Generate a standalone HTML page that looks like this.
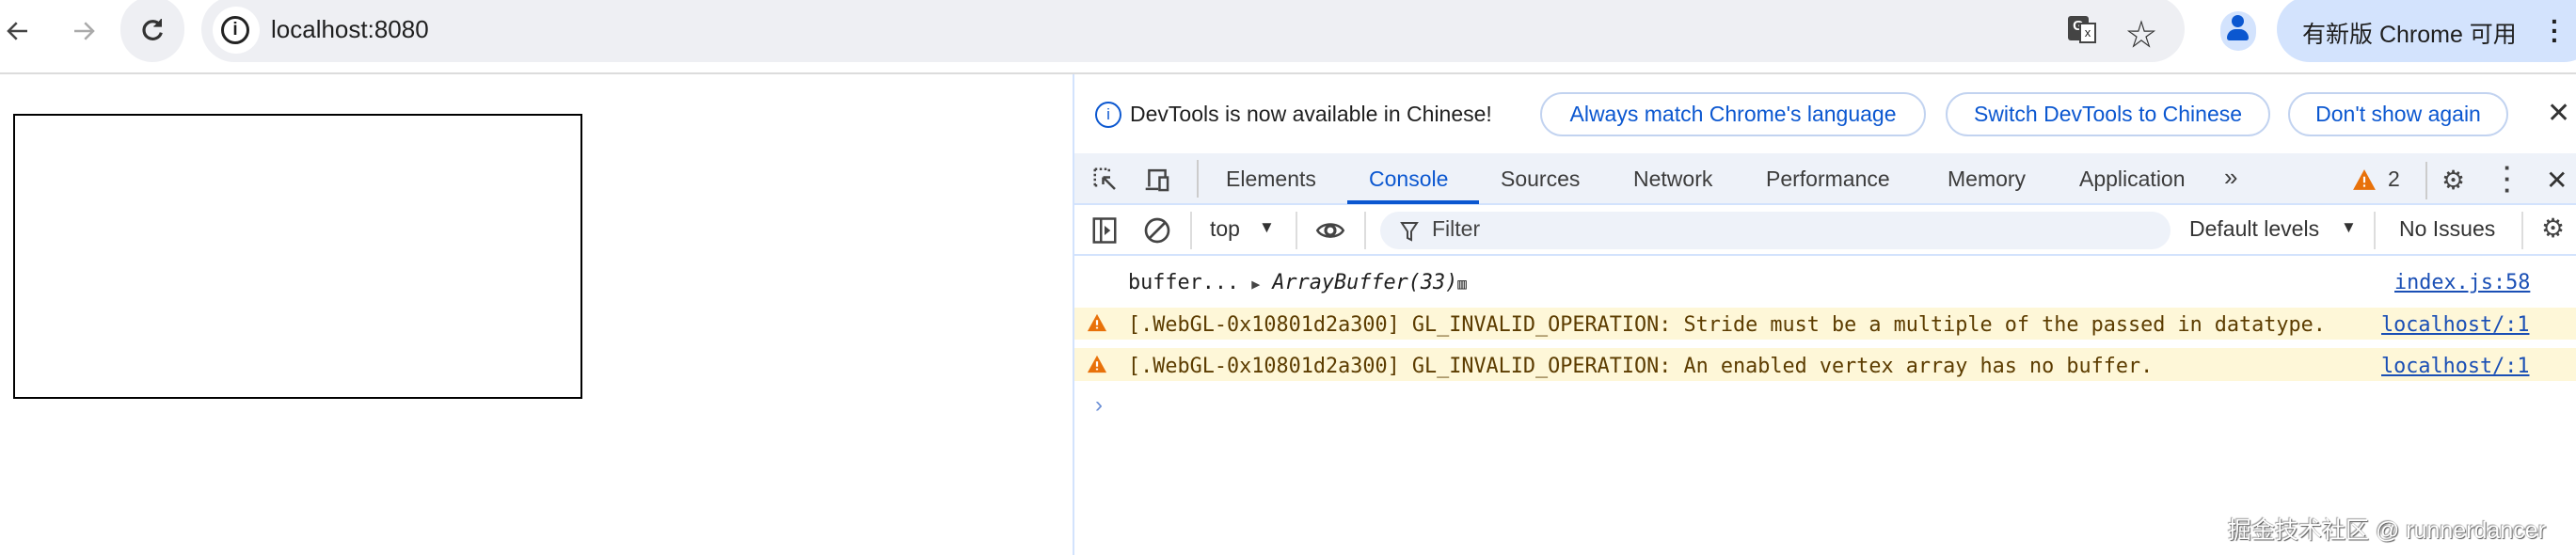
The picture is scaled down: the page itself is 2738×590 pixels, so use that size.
<!DOCTYPE html>
<html><head><meta charset="utf-8"><style>
*{margin:0;padding:0;box-sizing:border-box}
body{width:2738px;height:590px;position:relative;overflow:hidden;background:#fff;font-family:"Liberation Sans","Noto Sans CJK SC",sans-serif;color:#1f1f1f}
.a{position:absolute;white-space:nowrap}
.mono{font-family:"DejaVu Sans Mono","Liberation Mono",monospace}
.btn{position:absolute;top:98px;height:47px;border:2px solid #c2d3f0;border-radius:24px;color:#0b57d0;font-size:23px;line-height:43px;text-align:center}
.tab{position:absolute;top:177px;font-size:23px;color:#3c3c3c}
</style></head><body>
<div class="a" style="left:0;top:0;width:2738px;height:77px;background:#fff"></div>
<svg class="a" style="left:4px;top:18px" width="30" height="30" viewBox="0 0 24 24"><path d="M20 12H5M11 5l-7 7 7 7" fill="none" stroke="#444" stroke-width="2"/></svg>
<svg class="a" style="left:74px;top:18px" width="30" height="30" viewBox="0 0 24 24"><path d="M4 12h15M13 5l7 7-7 7" fill="none" stroke="#aaa" stroke-width="2"/></svg>
<div class="a" style="left:128px;top:-4px;width:68px;height:70px;border-radius:34px;background:#eeeff3"></div>
<svg class="a" style="left:146px;top:16px" width="32" height="32" viewBox="0 0 24 24"><path d="M18 8a7 7 0 1 0 1 6" fill="none" stroke="#333" stroke-width="2.4"/><path d="M19 3v6h-6" fill="#333" stroke="#333" stroke-width="1"/></svg>
<div class="a" style="left:214px;top:-4px;width:2108px;height:70px;border-radius:35px;background:#eeeff3"></div>
<div class="a" style="left:226px;top:7px;width:50px;height:50px;border-radius:25px;background:#fff"></div>
<div class="a" style="left:235px;top:17px;width:30px;height:30px;border-radius:15px;border:3px solid #222;text-align:center;font-weight:bold;font-size:19px;line-height:24px">i</div>
<div class="a" style="left:288px;top:16px;font-size:26px;color:#1f1f1f">localhost:8080</div>
<div class="a" style="left:2198px;top:17px;width:22px;height:26px;background:#444;border-radius:3px;color:#fff;font-size:15px;font-weight:bold;line-height:22px;text-align:center">G</div>
<div class="a" style="left:2210px;top:24px;width:18px;height:22px;border:2px solid #444;background:#fff;font-size:13px;line-height:17px;text-align:center">x</div>
<div class="a" style="left:2260px;top:12px;font-size:32px;color:#333">☆</div>
<div class="a" style="left:2360px;top:12px;width:38px;height:42px;border-radius:19px;background:#d3e3fd"></div>
<div class="a" style="left:2372px;top:16px;width:13px;height:13px;border-radius:7px;background:#0b57d0"></div>
<div class="a" style="left:2367px;top:31px;width:23px;height:12px;border-radius:10px 10px 3px 3px;background:#0b57d0"></div>
<div class="a" style="left:2420px;top:-4px;width:340px;height:70px;border-radius:35px;background:#d3e3fd"></div>
<div class="a" style="left:2447px;top:17px;font-size:25px;color:#1f1f1f">有新版 Chrome 可用</div>
<div class="a" style="left:2711px;top:18px;font-size:28px;font-weight:bold;line-height:10px;color:#1f1f1f">·<br>·<br>·</div>
<div class="a" style="left:0;top:77px;width:2738px;height:2px;background:#dcdcdc"></div>
<div class="a" style="left:14px;top:121px;width:605px;height:303px;border:2px solid #000"></div>
<div class="a" style="left:1140px;top:79px;width:2px;height:511px;background:#d3e3fd"></div>
<div class="a" style="left:1164px;top:108px;width:28px;height:28px;border-radius:14px;border:2px solid #0b57d0;color:#0b57d0;font-size:17px;line-height:24px;text-align:center">i</div>
<div class="a" style="left:1201px;top:108px;font-size:23px">DevTools is now available in Chinese!</div>
<div class="btn" style="left:1637px;width:410px">Always match Chrome's language</div>
<div class="btn" style="left:2068px;width:345px">Switch DevTools to Chinese</div>
<div class="btn" style="left:2432px;width:234px">Don't show again</div>
<div class="a" style="left:2707px;top:103px;font-size:30px;color:#333">✕</div>
<div class="a" style="left:1142px;top:163px;width:1596px;height:54px;background:#eef2f9"></div>
<div class="a" style="left:1142px;top:216px;width:1596px;height:2px;background:#d3e3fd"></div>
<svg class="a" style="left:1160px;top:176px" width="30" height="30" viewBox="0 0 24 24"><path d="M3 3h12M3 3v14M3 17h3M15 3v3" fill="none" stroke="#444" stroke-width="2" stroke-dasharray="2 2"/><path d="M10 10l10 10M10 10h6M10 10v6" fill="none" stroke="#444" stroke-width="2"/></svg>
<svg class="a" style="left:1214px;top:176px" width="32" height="30" viewBox="0 0 26 24"><path d="M6 18V4h14v6M3 20h11" fill="none" stroke="#444" stroke-width="2"/><rect x="15" y="10" width="7" height="11" fill="none" stroke="#444" stroke-width="2"/></svg>
<div class="a" style="left:1272px;top:170px;width:2px;height:40px;background:#ccc"></div>
<div class="tab" style="left:1303px">Elements</div>
<div class="tab" style="left:1455px;color:#0b57d0">Console</div>
<div class="a" style="left:1432px;top:213px;width:140px;height:4px;background:#0b57d0"></div>
<div class="tab" style="left:1595px">Sources</div>
<div class="tab" style="left:1736px">Network</div>
<div class="tab" style="left:1877px">Performance</div>
<div class="tab" style="left:2070px">Memory</div>
<div class="tab" style="left:2210px">Application</div>
<div class="tab" style="left:2364px;font-size:26px;top:173px">»</div>
<svg class="a" style="left:2500px;top:178px" width="26" height="26" viewBox="0 0 24 24"><path d="M12 2L23 22H1z" fill="#e8710a"/><path d="M12 9v6M12 17v2" stroke="#fff" stroke-width="2"/></svg>
<div class="tab" style="left:2538px">2</div>
<div class="a" style="left:2578px;top:172px;width:2px;height:40px;background:#ccc"></div>
<div class="a" style="left:2595px;top:175px;font-size:28px;color:#444">⚙</div>
<div class="a" style="left:2661px;top:172px;font-size:26px;font-weight:bold;line-height:12px;color:#444">·<br>·<br>·</div>
<div class="a" style="left:2706px;top:175px;font-size:28px;color:#333">✕</div>
<div class="a" style="left:1142px;top:270px;width:1596px;height:2px;background:#d3e3fd"></div>
<svg class="a" style="left:1160px;top:230px" width="28" height="30" viewBox="0 0 22 24"><rect x="2" y="2" width="18" height="20" fill="none" stroke="#444" stroke-width="2"/><path d="M8 2v20" stroke="#444" stroke-width="2"/><path d="M11 8l5 4-5 4z" fill="#444"/></svg>
<svg class="a" style="left:1214px;top:229px" width="32" height="32" viewBox="0 0 24 24"><circle cx="12" cy="12" r="9" fill="none" stroke="#444" stroke-width="2"/><path d="M6 18L18 6" stroke="#444" stroke-width="2"/></svg>
<div class="a" style="left:1265px;top:225px;width:2px;height:40px;background:#ddd"></div>
<div class="a" style="left:1286px;top:230px;font-size:23px;color:#333">top</div>
<div class="a" style="left:1338px;top:232px;font-size:17px;color:#333">▼</div>
<div class="a" style="left:1377px;top:225px;width:2px;height:40px;background:#ddd"></div>
<svg class="a" style="left:1397px;top:230px" width="34" height="30" viewBox="0 0 24 24"><path d="M1 12c4-7 18-7 22 0c-4 7-18 7-22 0z" fill="none" stroke="#444" stroke-width="2"/><circle cx="12" cy="12" r="4" fill="none" stroke="#444" stroke-width="2.5"/></svg>
<div class="a" style="left:1450px;top:225px;width:2px;height:40px;background:#ddd"></div>
<div class="a" style="left:1467px;top:225px;width:840px;height:40px;border-radius:20px;background:#eef2f9"></div>
<svg class="a" style="left:1488px;top:234px" width="20" height="24" viewBox="0 0 20 24"><path d="M2 3h16l-6 9v9l-4-2v-7z" fill="none" stroke="#444" stroke-width="2"/></svg>
<div class="a" style="left:1522px;top:230px;font-size:23px;color:#444">Filter</div>
<div class="a" style="left:2327px;top:230px;font-size:23px;color:#333">Default levels</div>
<div class="a" style="left:2488px;top:232px;font-size:17px;color:#333">▼</div>
<div class="a" style="left:2523px;top:225px;width:2px;height:40px;background:#ddd"></div>
<div class="a" style="left:2550px;top:230px;font-size:23px;color:#333">No Issues</div>
<div class="a" style="left:2680px;top:225px;width:2px;height:40px;background:#ddd"></div>
<div class="a" style="left:2701px;top:226px;font-size:28px;color:#444">⚙</div>
<div class="a mono" style="left:1199px;top:288px;font-size:21.8px;color:#1f1f1f">buffer... <span style="font-size:15px;color:#444">▶</span> <i>ArrayBuffer(33)</i><span style="font-size:16px">▥</span></div>
<div class="a mono" style="left:2545px;top:288px;font-size:21.8px;color:#1a4fb5;text-decoration:underline">index.js:58</div>
<div class="a" style="left:1142px;top:327px;width:1596px;height:34px;background:#fef7d8"></div>
<div class="a" style="left:1142px;top:370px;width:1596px;height:35px;background:#fef7d8"></div>
<svg class="a" style="left:1155px;top:331px" width="22" height="24" viewBox="0 0 24 24"><path d="M12 2L23 22H1z" fill="#e8710a"/><path d="M12 9v6M12 17v2" stroke="#fff" stroke-width="2.4"/></svg>
<svg class="a" style="left:1155px;top:375px" width="22" height="24" viewBox="0 0 24 24"><path d="M12 2L23 22H1z" fill="#e8710a"/><path d="M12 9v6M12 17v2" stroke="#fff" stroke-width="2.4"/></svg>
<div class="a mono" style="left:1199px;top:333px;font-size:21.8px;color:#5c3c00">[.WebGL-0x10801d2a300] GL_INVALID_OPERATION: Stride must be a multiple of the passed in datatype.</div>
<div class="a mono" style="left:1199px;top:377px;font-size:21.8px;color:#5c3c00">[.WebGL-0x10801d2a300] GL_INVALID_OPERATION: An enabled vertex array has no buffer.</div>
<div class="a mono" style="left:2531px;top:333px;font-size:21.8px;color:#1a4fb5;text-decoration:underline">localhost/:1</div>
<div class="a mono" style="left:2531px;top:377px;font-size:21.8px;color:#1a4fb5;text-decoration:underline">localhost/:1</div>
<div class="a" style="left:1164px;top:417px;font-size:24px;color:#6b8fd6">›</div>
<div class="a" style="left:2368px;top:544px;font-size:25px;color:#fff;text-shadow:1px 1px 1px #555,-1px -1px 1px #999">掘金技术社区 @ runnerdancer</div>
</body></html>
